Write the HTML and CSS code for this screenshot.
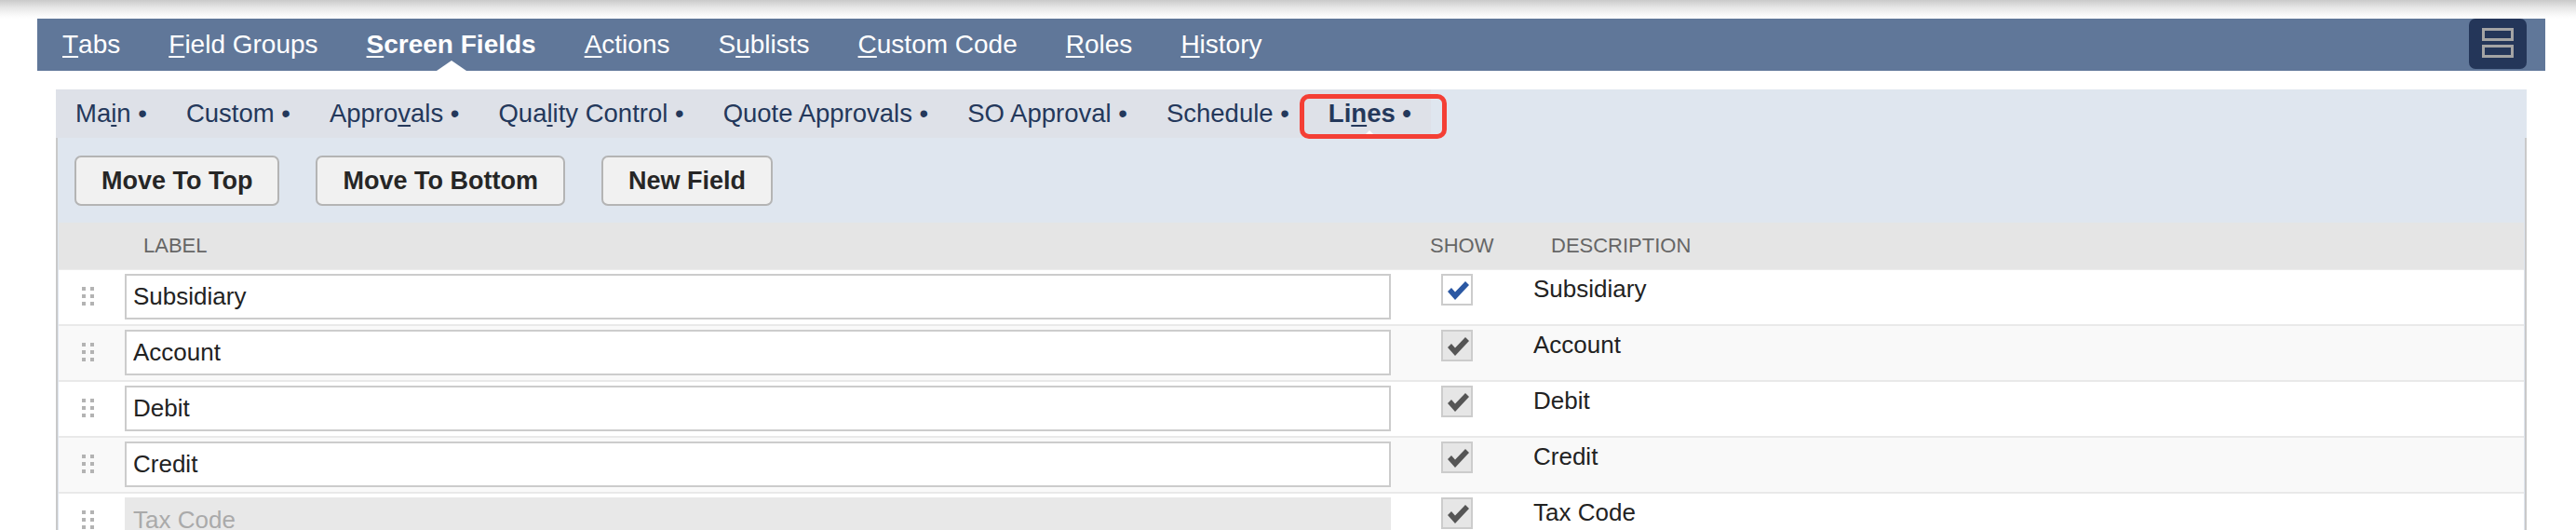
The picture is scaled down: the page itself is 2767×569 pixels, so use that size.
FILE: index.html
```html
<!DOCTYPE html>
<html lang="en">
<head>
<meta charset="utf-8">
<title>Screen Fields</title>
<link rel="stylesheet" href="styles.css">
</head>
<body>
<div class="topshadow"></div>
<div class="wrap">
  <nav class="tabbar">
    <ul class="tabs">
      <li><u>T</u>abs</li>
      <li><u>F</u>ield Groups</li>
      <li class="active"><u>S</u>creen Fields</li>
      <li><u>A</u>ctions</li>
      <li>S<u>u</u>blists</li>
      <li><u>C</u>ustom Code</li>
      <li><u>R</u>oles</li>
      <li><u>H</u>istory</li>
    </ul>
    <button class="layout-btn" type="button" aria-label="Layout">
      <svg width="62" height="54" viewBox="0 0 62 54">
        <rect x="15.5" y="11.5" width="31" height="11" fill="#243659" stroke="#a4a4a4" stroke-width="3"/>
        <rect x="15.5" y="29.5" width="31" height="11" fill="#243659" stroke="#a4a4a4" stroke-width="3"/>
      </svg>
    </button>
  </nav>

  <section class="panel">
    <div class="subtab-row">
      <ul class="subtabs">
        <li>Ma<u>i</u>n •</li>
        <li>Custom •</li>
        <li>Appro<u>v</u>als •</li>
        <li>Qua<u>l</u>ity Control •</li>
        <li>Quote Approvals •</li>
        <li>SO Approval •</li>
        <li>Schedule •</li>
        <li class="current">Li<u>n</u>es •</li>
      </ul>
    </div>
    <div class="panel-body">
      <div class="actions">
        <button class="btn" type="button">Move To Top</button>
        <button class="btn" type="button">Move To Bottom</button>
        <button class="btn" type="button">New Field</button>
      </div>
      <div class="fields">
        <div class="row head">
          <div class="cell"></div>
          <div class="cell h-label">LABEL</div>
          <div class="cell h-show">SHOW</div>
          <div class="cell h-desc">DESCRIPTION</div>
        </div>

        <div class="row">
          <div class="cell handle"><svg class="dots" width="13" height="20" viewBox="0 0 13 20"><g fill="#b3b3b3"><rect x="0" y="0" width="4" height="4"/><rect x="9" y="0" width="4" height="4"/><rect x="0" y="8" width="4" height="4"/><rect x="9" y="8" width="4" height="4"/><rect x="0" y="16" width="4" height="4"/><rect x="9" y="16" width="4" height="4"/></g></svg></div>
          <div class="cell"><input class="field" type="text" value="Subsidiary"></div>
          <div class="cell show"><span class="check on"><svg width="30" height="30" viewBox="0 0 30 30"><polygon points="5,17 9,13 13,17.5 24,6 28,10 13,26" fill="#2b58a3"/></svg></span></div>
          <div class="cell desc">Subsidiary</div>
        </div>

        <div class="row alt">
          <div class="cell handle"><svg class="dots" width="13" height="20" viewBox="0 0 13 20"><g fill="#b3b3b3"><rect x="0" y="0" width="4" height="4"/><rect x="9" y="0" width="4" height="4"/><rect x="0" y="8" width="4" height="4"/><rect x="9" y="8" width="4" height="4"/><rect x="0" y="16" width="4" height="4"/><rect x="9" y="16" width="4" height="4"/></g></svg></div>
          <div class="cell"><input class="field" type="text" value="Account"></div>
          <div class="cell show"><span class="check"><svg width="30" height="30" viewBox="0 0 30 30"><polygon points="5,17 9,13 13,17.5 24,6 28,10 13,26" fill="#555555"/></svg></span></div>
          <div class="cell desc">Account</div>
        </div>

        <div class="row">
          <div class="cell handle"><svg class="dots" width="13" height="20" viewBox="0 0 13 20"><g fill="#b3b3b3"><rect x="0" y="0" width="4" height="4"/><rect x="9" y="0" width="4" height="4"/><rect x="0" y="8" width="4" height="4"/><rect x="9" y="8" width="4" height="4"/><rect x="0" y="16" width="4" height="4"/><rect x="9" y="16" width="4" height="4"/></g></svg></div>
          <div class="cell"><input class="field" type="text" value="Debit"></div>
          <div class="cell show"><span class="check"><svg width="30" height="30" viewBox="0 0 30 30"><polygon points="5,17 9,13 13,17.5 24,6 28,10 13,26" fill="#555555"/></svg></span></div>
          <div class="cell desc">Debit</div>
        </div>

        <div class="row alt">
          <div class="cell handle"><svg class="dots" width="13" height="20" viewBox="0 0 13 20"><g fill="#b3b3b3"><rect x="0" y="0" width="4" height="4"/><rect x="9" y="0" width="4" height="4"/><rect x="0" y="8" width="4" height="4"/><rect x="9" y="8" width="4" height="4"/><rect x="0" y="16" width="4" height="4"/><rect x="9" y="16" width="4" height="4"/></g></svg></div>
          <div class="cell"><input class="field" type="text" value="Credit"></div>
          <div class="cell show"><span class="check"><svg width="30" height="30" viewBox="0 0 30 30"><polygon points="5,17 9,13 13,17.5 24,6 28,10 13,26" fill="#555555"/></svg></span></div>
          <div class="cell desc">Credit</div>
        </div>

        <div class="row">
          <div class="cell handle"><svg class="dots" width="13" height="20" viewBox="0 0 13 20"><g fill="#b3b3b3"><rect x="0" y="0" width="4" height="4"/><rect x="9" y="0" width="4" height="4"/><rect x="0" y="8" width="4" height="4"/><rect x="9" y="8" width="4" height="4"/><rect x="0" y="16" width="4" height="4"/><rect x="9" y="16" width="4" height="4"/></g></svg></div>
          <div class="cell"><input class="field disabled" type="text" value="Tax Code" disabled></div>
          <div class="cell show"><span class="check"><svg width="30" height="30" viewBox="0 0 30 30"><polygon points="5,17 9,13 13,17.5 24,6 28,10 13,26" fill="#555555"/></svg></span></div>
          <div class="cell desc">Tax Code</div>
        </div>
      </div>
    </div>
  </section>
</div>
</body>
</html>
```

FILE: styles.css
```css
html, body {
  margin: 0;
  padding: 0;
  overflow: hidden;
  background: #ffffff;
}

body {
  font-family: "Liberation Sans", Arial, Helvetica, sans-serif;
  color: #222222;
}

ul {
  list-style: none;
  margin: 0;
  padding: 0;
}

.topshadow {
  height: 20px;
  background: linear-gradient(to bottom, #cacaca 0%, #e6e6e6 40%, #fbfbfb 85%, #ffffff 100%);
}

.wrap {
  padding: 0 33px 0 40px;
}

/* Main tab bar */
.tabbar {
  display: flex;
  align-items: flex-start;
  height: 56px;
  background: #607799;
}

.tabs {
  display: flex;
  gap: 52px;
  height: 56px;
  padding-left: 27px;
}

.tabs li {
  position: relative;
  display: flex;
  align-items: center;
  font-size: 28px;
  color: #ffffff;
  white-space: nowrap;
}

.tabs li u {
  text-underline-offset: 3px;
  text-decoration-thickness: 2px;
}

.tabs li.active {
  font-weight: bold;
}

.tabs li.active::after {
  content: "";
  position: absolute;
  left: 50%;
  bottom: 0;
  transform: translateX(-50%);
  border-left: 16px solid transparent;
  border-right: 16px solid transparent;
  border-bottom: 11px solid #ffffff;
}

.layout-btn {
  margin-left: auto;
  margin-right: 20px;
  width: 62px;
  height: 54px;
  padding: 0;
  border: 0;
  border-radius: 7px;
  background: #243659;
  display: block;
}

.layout-btn svg {
  display: block;
}

/* Panel */
.panel {
  margin: 20px 20px 0 20px;
  background: #dfe6ef;
}

.subtab-row {
  display: flex;
  height: 52px;
}

.subtabs {
  display: flex;
  background: #dee1e8;
}

.subtabs li {
  position: relative;
  padding: 0 21px;
  line-height: 52px;
  font-size: 27.5px;
  color: #24385b;
  white-space: nowrap;
}

.subtabs li u {
  text-underline-offset: 3px;
  text-decoration-thickness: 2px;
}

.subtabs li.current {
  font-weight: bold;
}

.subtabs li.current::before {
  content: "";
  position: absolute;
  left: -10px;
  right: -17px;
  top: 5px;
  bottom: -1px;
  border: 5px solid #f43f35;
  border-radius: 10px;
  z-index: 2;
}

.subtabs li.current::after {
  content: "";
  position: absolute;
  left: 50%;
  bottom: 0;
  transform: translateX(-50%);
  border-left: 8px solid transparent;
  border-right: 8px solid transparent;
  border-bottom: 8px solid #ffffff;
  z-index: 1;
}

.panel-body {
  border-left: 2px solid #c9c9c9;
  border-right: 2px solid #c9c9c9;
  padding: 19px 1px 0 1px;
}

.actions {
  display: flex;
  gap: 39px;
  padding-left: 17px;
  padding-bottom: 18px;
}

.btn {
  height: 54px;
  padding: 0 27px;
  box-sizing: border-box;
  border: 2px solid #b4b4b4;
  border-radius: 7px;
  background: #f1f1f1;
  font-family: "Liberation Sans", Arial, sans-serif;
  font-size: 27px;
  font-weight: bold;
  color: #262626;
}

/* Field list */
.fields {
  background: #ffffff;
}

.row {
  display: grid;
  grid-template-columns: 71px 1360px 142px 1fr;
  align-items: start;
  height: 58px;
  border-bottom: 2px solid #e9e9e9;
  background: #ffffff;
}

.row.alt {
  background: #f9f9f9;
}

.row.head {
  height: 50px;
  border-bottom: 1px solid #ececec;
  background: #e5e5e5;
  align-items: center;
  font-size: 22px;
  color: #666666;
}

.h-label {
  padding-left: 20px;
}

.h-show {
  padding-left: 42px;
}

.h-desc {
  padding-left: 30px;
}

.handle {
  padding: 18px 0 0 25px;
}

.dots {
  display: block;
}

.field {
  display: block;
  box-sizing: border-box;
  width: 1360px;
  height: 49px;
  margin-top: 4px;
  padding: 0 7px;
  border: 2px solid #cccccc;
  background: #ffffff;
  font-family: "Liberation Sans", Arial, sans-serif;
  font-size: 26px;
  color: #222222;
  outline: none;
}

.field.disabled {
  background: #e8e8e8;
  border-color: #e8e8e8;
  color: #aaaaaa;
}

.show {
  display: flex;
  justify-content: center;
  padding-top: 4px;
}

.check {
  display: flex;
  align-items: center;
  justify-content: center;
  width: 34px;
  height: 34px;
  box-sizing: border-box;
  border: 2px solid #cccccc;
  background: #e6e6e6;
}

.check.on {
  background: #ffffff;
}

.check svg {
  display: block;
}

.desc {
  padding: 5px 0 0 11px;
  font-size: 26px;
  line-height: 30px;
  color: #222222;
}
```
